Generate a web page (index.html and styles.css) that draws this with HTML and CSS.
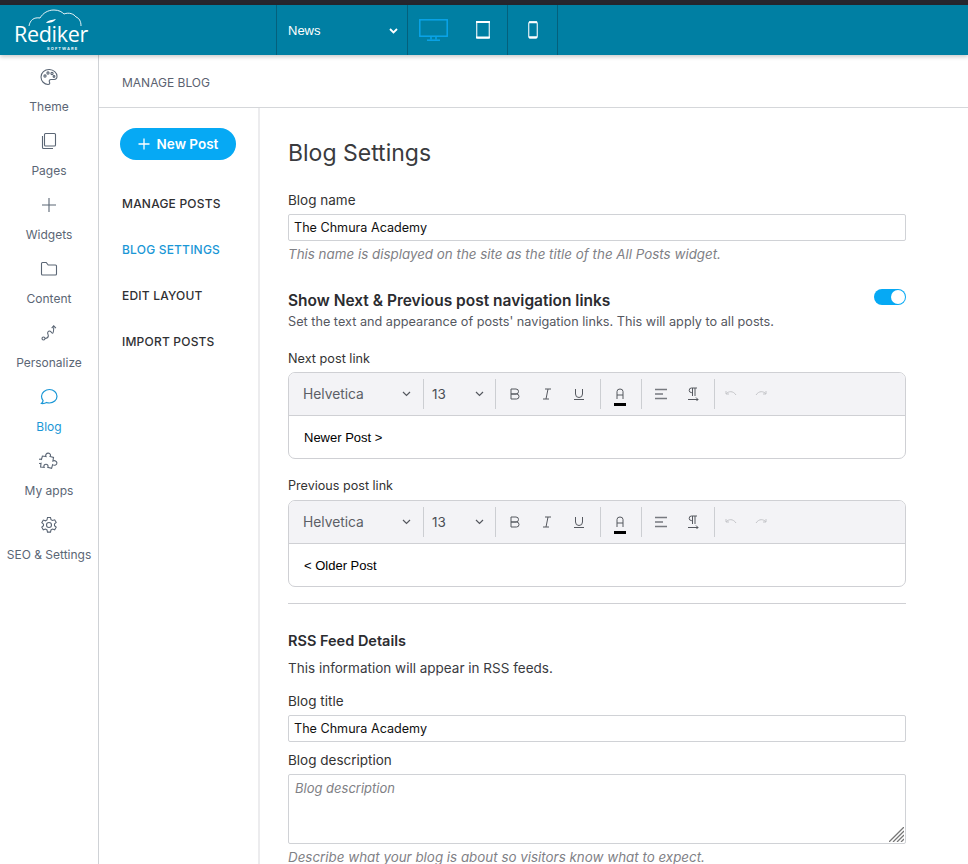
FILE: index.html
```html
<!DOCTYPE html>
<html lang="en">
<head>
<meta charset="utf-8">
<title>Blog Settings</title>
<link rel="stylesheet" href="styles.css">
</head>
<body>
<div class="app">
  <div class="strip"></div>
  <header class="topbar">
    <div class="brand">
      <svg class="cloud" width="54" height="18" viewBox="0 0 54 18" fill="none" stroke="#fff" stroke-width=".9">
        <path d="M1 17C2 11 6 8 12 9C15 4 20 1 26 1C31 1 34 3 36 5C41 3 46 5 48 8C51 9 53 12 53 17"/>
        <path d="M18 14C20 11 24 11 28 10C26 13 22 14 18 14Z" fill="#fff" stroke="none"/>
      </svg>
      <div class="brand-name">Rediker</div>
      <div class="brand-sub">SOFTWARE</div>
    </div>
    <div class="page-select"><span>News</span>
      <svg width="9" height="6" viewBox="0 0 9 6" fill="none" stroke="#fff" stroke-width="1.800"><path d="M1 1l3.500 3.500L8 1"/></svg>
    </div>
    <div class="device">
      <svg width="29" height="22" viewBox="0 0 29 22" fill="none" stroke="#0aa5ea" stroke-width="1.500"><rect x=".8" y=".8" width="27.400" height="16.400"/><path d="M12 18v2.500M17 18v2.500" stroke-width="1.500"/><path d="M8 21.200h13" stroke-width="1.500"/></svg>
    </div>
    <div class="device device-end">
      <svg width="14" height="18" viewBox="0 0 14 18" fill="none"><rect x=".7" y="1" width="12.600" height="16" rx="1" stroke="#cfe6ee" stroke-width="1.300"/><path d="M0 1h14M0 16.500h14" stroke="#fff" stroke-width="2"/></svg>
    </div>
    <div class="device device-end">
      <svg width="10" height="18" viewBox="0 0 10 18" fill="none"><rect x=".7" y="1" width="8.600" height="16" rx="1.500" stroke="#cfe6ee" stroke-width="1.300"/><path d="M1 1.200h8M1 16.300h8" stroke="#fff" stroke-width="2"/></svg>
    </div>
  </header>

  <div class="body">
    <nav class="rail">
      <a class="rail-item">
        <svg width="20" height="20" viewBox="0 0 20 20" fill="none" stroke="#5b6675" stroke-width="1.100"><path d="M10.500 2.500C5.500 2.300 2 5.800 2 10c0 4 3.300 7.500 7 7.500 1.800 0 2-1.300 1.500-2.300-.7-1.400 0-2.700 1.500-2.700h3c1.800 0 3-1.300 3-3.200 0-3.800-3.500-6.600-7.500-6.800z"/><circle cx="6" cy="9" r="1.100"/><circle cx="9" cy="6" r="1.100"/><circle cx="13" cy="6.500" r="1.100"/><circle cx="15" cy="9.500" r=".9"/></svg>
        <span>Theme</span>
      </a>
      <a class="rail-item">
        <svg width="20" height="20" viewBox="0 0 20 20" fill="none" stroke="#5b6675" stroke-width="1.100"><rect x="5.500" y="2.500" width="11" height="12.500" rx="1"/><path d="M3.500 5v11.500a1 1 0 0 0 1 1H14"/></svg>
        <span>Pages</span>
      </a>
      <a class="rail-item">
        <svg width="20" height="20" viewBox="0 0 20 20" fill="none" stroke="#5b6675" stroke-width="1.100"><path d="M10 3v14M3 10h14"/></svg>
        <span>Widgets</span>
      </a>
      <a class="rail-item">
        <svg width="20" height="20" viewBox="0 0 20 20" fill="none" stroke="#5b6675" stroke-width="1.100"><path d="M2.500 4.500a1 1 0 0 1 1-1h3.700l2 2.500h7.300a1 1 0 0 1 1 1V15a1 1 0 0 1-1 1h-13a1 1 0 0 1-1-1z"/></svg>
        <span>Content</span>
      </a>
      <a class="rail-item">
        <svg width="20" height="20" viewBox="0 0 20 20" fill="none" stroke="#5b6675" stroke-width="1.100"><circle cx="4.500" cy="15.500" r="1.500"/><path d="M6 15.500c2 0 3-.3 3.300-2.300.2-1.500-.9-2.200-.6-3.700.3-1.300 1.500-1.700 2.500-1.300 1.300.5 1 2 2.200 2 1.300 0 1.300-2.700 1.300-6"/><path d="M12.700 5.200l2-2.300 2.200 2.300"/></svg>
        <span>Personalize</span>
      </a>
      <a class="rail-item rail-active">
        <svg width="20" height="20" viewBox="0 0 20 20" fill="none" stroke="#1b97d6" stroke-width="1.200"><path d="M10.500 2.500c4 0 7.500 2.900 7.500 6.700 0 3.900-3.500 6.800-7.500 6.800-1 0-2-.1-2.900-.5-1.500.9-3.200 1.200-5.100 1 .9-.9 1.400-1.800 1.600-2.900C3 12.400 2.500 10.900 2.500 9.200c0-3.800 4-6.700 8-6.700z"/></svg>
        <span>Blog</span>
      </a>
      <a class="rail-item">
        <svg width="20" height="20" viewBox="0 0 20 20" fill="none" stroke="#5b6675" stroke-width="1.100"><path d="M7 5.500c-.9-1.900.6-3.500 2.300-3.400 1.700.1 2.900 1.800 1.700 3.400l3.500 1-.6 3.500c1.800-1 3.900.1 4 1.900.1 2-2.300 3.100-4.300 1.700l-1 3.700-3.800-1c.8-1.800-.4-3.100-1.800-3.100-1.500 0-2.700 1.500-1.800 3.200l-3.600-.3.400-3.800c-1.800.7-3.300-.6-3.200-2.100.1-1.700 2-2.700 3.700-1.700L3.400 5z"/></svg>
        <span>My apps</span>
      </a>
      <a class="rail-item">
        <svg width="20" height="20" viewBox="0 0 20 20" fill="none" stroke="#5b6675" stroke-width="1.100"><path d="M8.500 2.500h3l.5 2.200 1.500.8 2.200-.7 1.500 2.600-1.700 1.500v1.800l1.700 1.500-1.500 2.600-2.200-.7-1.500.8-.5 2.200h-3l-.5-2.200-1.500-.8-2.200.7-1.500-2.600 1.700-1.500V9.200L2.800 7.700l1.500-2.600 2.200.7 1.500-.8z"/><circle cx="10" cy="10" r="2.500"/></svg>
        <span>SEO &amp; Settings</span>
      </a>
    </nav>

    <main class="main">
      <div class="main-head">MANAGE BLOG</div>
      <div class="main-body">
        <aside class="subnav">
          <button class="new-post">
            <svg width="12" height="12" viewBox="0 0 12 12" stroke="#fff" stroke-width="1.300"><path d="M6 .5v11M.5 6h11"/></svg>
            New Post
          </button>
          <a class="sub-link">MANAGE POSTS</a>
          <a class="sub-link sub-active">BLOG SETTINGS</a>
          <a class="sub-link">EDIT LAYOUT</a>
          <a class="sub-link">IMPORT POSTS</a>
        </aside>

        <section class="form">
          <h1 class="title">Blog Settings</h1>

          <label class="label first">Blog name</label>
          <div class="input">The Chmura Academy</div>
          <p class="hint">This name is displayed on the site as the title of the All Posts widget.</p>

          <div class="heading-row">
            <h2 class="heading nav-heading">Show Next &amp; Previous post navigation links</h2>
            <div class="toggle"><div class="knob"></div></div>
          </div>
          <p class="sub">Set the text and appearance of posts' navigation links. This will apply to all posts.</p>

          <label class="label next">Next post link</label>
          <div class="editor">
            <div class="toolbar">
              <div class="tb-select tb-font">Helvetica
                <svg width="9" height="6" viewBox="0 0 9 6" fill="none" stroke="#55585f" stroke-width="1.200"><path d="M1 1l3.500 3.500L8 1"/></svg>
              </div>
              <div class="tb-select tb-size">13
                <svg width="9" height="6" viewBox="0 0 9 6" fill="none" stroke="#55585f" stroke-width="1.200"><path d="M1 1l3.500 3.500L8 1"/></svg>
              </div>
              <div class="tb-group tb-format">
                <svg class="ic" width="12" height="12" viewBox="0 0 12 12" fill="none" stroke="#55585f"><path d="M2 1h5a2.500 2.500 0 0 1 0 5H2zM2 6h5.500a2.500 2.500 0 0 1 0 5H2z"/></svg>
                <svg class="ic" width="12" height="12" viewBox="0 0 12 12" fill="none" stroke="#55585f"><path d="M4 1h6M2 11h6M7 1L5 11"/></svg>
                <svg class="ic" width="12" height="12" viewBox="0 0 12 12" fill="none" stroke="#55585f"><path d="M2.500 1v5a3.500 3.500 0 0 0 7 0V1M1 11.500h10"/></svg>
              </div>
              <div class="tb-group tb-color">
                <svg width="12" height="18" viewBox="0 0 12 18" fill="none"><path d="M3 11V3.500a3 2.500 0 0 1 6 0V11M3 7h6" stroke="#55585f"/><rect y="15" width="12" height="3" fill="#000"/></svg>
              </div>
              <div class="tb-group tb-para">
                <svg class="ic" width="12" height="12" viewBox="0 0 12 12" fill="none" stroke="#777a80" stroke-width="1.300"><path d="M0 1.500h12M0 6h8M0 10.500h12"/></svg>
                <svg class="ic" width="12" height="14" viewBox="0 0 12 14" fill="none" stroke="#55585f"><path d="M5.500 1v8M8 1v8M10 1H4.500a2.300 2.300 0 0 0 0 4.600h1M1 12.500h10M9 10.500l2 2-2 2"/></svg>
              </div>
              <div class="tb-group tb-last">
                <svg class="ic" width="12" height="8" viewBox="0 0 12 8" fill="none" stroke="#c4c5c9"><path d="M1 1v3h3M1 4c2.500-3 7-3.500 10 1"/></svg>
                <svg class="ic" width="12" height="8" viewBox="0 0 12 8" fill="none" stroke="#c4c5c9"><path d="M11 1v3H8M11 4C8.500 1 4 .5 1 5"/></svg>
              </div>
            </div>
            <div class="editor-text">Newer Post &gt;</div>
          </div>

          <label class="label prev">Previous post link</label>
          <div class="editor">
            <div class="toolbar">
              <div class="tb-select tb-font">Helvetica
                <svg width="9" height="6" viewBox="0 0 9 6" fill="none" stroke="#55585f" stroke-width="1.200"><path d="M1 1l3.500 3.500L8 1"/></svg>
              </div>
              <div class="tb-select tb-size">13
                <svg width="9" height="6" viewBox="0 0 9 6" fill="none" stroke="#55585f" stroke-width="1.200"><path d="M1 1l3.500 3.500L8 1"/></svg>
              </div>
              <div class="tb-group tb-format">
                <svg class="ic" width="12" height="12" viewBox="0 0 12 12" fill="none" stroke="#55585f"><path d="M2 1h5a2.500 2.500 0 0 1 0 5H2zM2 6h5.500a2.500 2.500 0 0 1 0 5H2z"/></svg>
                <svg class="ic" width="12" height="12" viewBox="0 0 12 12" fill="none" stroke="#55585f"><path d="M4 1h6M2 11h6M7 1L5 11"/></svg>
                <svg class="ic" width="12" height="12" viewBox="0 0 12 12" fill="none" stroke="#55585f"><path d="M2.500 1v5a3.500 3.500 0 0 0 7 0V1M1 11.500h10"/></svg>
              </div>
              <div class="tb-group tb-color">
                <svg width="12" height="18" viewBox="0 0 12 18" fill="none"><path d="M3 11V3.500a3 2.500 0 0 1 6 0V11M3 7h6" stroke="#55585f"/><rect y="15" width="12" height="3" fill="#000"/></svg>
              </div>
              <div class="tb-group tb-para">
                <svg class="ic" width="12" height="12" viewBox="0 0 12 12" fill="none" stroke="#777a80" stroke-width="1.300"><path d="M0 1.500h12M0 6h8M0 10.500h12"/></svg>
                <svg class="ic" width="12" height="14" viewBox="0 0 12 14" fill="none" stroke="#55585f"><path d="M5.500 1v8M8 1v8M10 1H4.500a2.300 2.300 0 0 0 0 4.600h1M1 12.500h10M9 10.500l2 2-2 2"/></svg>
              </div>
              <div class="tb-group tb-last">
                <svg class="ic" width="12" height="8" viewBox="0 0 12 8" fill="none" stroke="#c4c5c9"><path d="M1 1v3h3M1 4c2.500-3 7-3.500 10 1"/></svg>
                <svg class="ic" width="12" height="8" viewBox="0 0 12 8" fill="none" stroke="#c4c5c9"><path d="M11 1v3H8M11 4C8.500 1 4 .5 1 5"/></svg>
              </div>
            </div>
            <div class="editor-text">&lt; Older Post</div>
          </div>

          <hr class="rule">

          <h2 class="heading rss">RSS Feed Details</h2>
          <p class="rss-note">This information will appear in RSS feeds.</p>

          <label class="label rss-label">Blog title</label>
          <div class="input">The Chmura Academy</div>
          <label class="label desc-label">Blog description</label>
          <div class="textarea">Blog description
            <svg class="grip" width="15" height="15" viewBox="0 0 15 15" stroke="#777" stroke-width="1.300"><path d="M0 15L15 0M4 15L15 4M8 15l7-7M12 15l3-3"/></svg>
          </div>
          <p class="hint tail">Describe what your blog is about so visitors know what to expect.</p>
        </section>
      </div>
    </main>
  </div>
</div>
</body>
</html>
```
FILE: styles.css
```css
* { box-sizing: border-box; }
html, body { margin: 0; height: 100%; overflow: hidden; background: #fff; }
body { font-family: Inter, "Noto Sans", sans-serif; color: #2f3033; font-size: 13px; }
.app { height: 864px; display: flex; flex-direction: column; overflow: hidden; }
.strip { height: 5px; background: #26262e; flex: none; }

.topbar { height: 50px; flex: none; background: #007fa3; display: flex; color: #fff; box-shadow: 0 2px 4px rgba(0,0,0,.2); position: relative; z-index: 2; }
.brand { width: 277px; position: relative; border-right: 1px solid #04607c; padding: 20px 0 0 14px; flex: none; }
.cloud { position: absolute; left: 28px; top: 4px; }
.brand-name { font-family: "Open Sans", sans-serif; font-size: 21.500px; line-height: 18px; letter-spacing: -.3px; }
.brand-sub { font-size: 4px; letter-spacing: 1.100px; line-height: 5px; margin: 3px 0 0 33px; font-weight: 600; }
.page-select { width: 131px; flex: none; border-right: 1px solid #04607c; display: flex; align-items: center; justify-content: space-between; padding: 1px 9px 0 11px; font-size: 13px; font-family: "Liberation Sans", sans-serif; }
.device { width: 50px; flex: none; display: flex; align-items: center; justify-content: center; }
.device-end { border-right: 1px solid #04607c; }

.body { flex: 1; display: flex; min-height: 0; }
.rail { width: 99px; flex: none; border-right: 1px solid #cfd2d6; padding-top: 5px; }
.rail-item { height: 64px; display: flex; flex-direction: column; align-items: center; gap: 12px; padding-top: 7px; color: #5b6675; font-size: 12px; line-height: 16px; white-space: nowrap; }
.rail-item svg { flex: none; }
.rail-active { color: #1b97d6; }

.main { flex: 1; min-width: 0; display: flex; flex-direction: column; }
.main-head { height: 53px; flex: none; border-bottom: 1px solid #d5d7da; padding: 2px 0 0 23px; display: flex; align-items: center; font-size: 12px; color: #5b6270; }
.main-body { flex: 1; display: flex; min-height: 0; }
.subnav { width: 161px; flex: none; border-right: 2px solid #ececee; padding: 20px 0 0 21px; }
.new-post { width: 116px; height: 32px; border: 0; border-radius: 16px; background: #06a9f4; color: #fff; font: 600 13.500px Inter, sans-serif; display: flex; align-items: center; justify-content: center; gap: 7px; padding: 0; margin-bottom: 25px; }
.sub-link { display: block; height: 46px; line-height: 38px; padding-left: 2px; font-size: 12px; font-weight: 500; color: #2f3033; letter-spacing: .2px; }
.sub-active { color: #1b97d6; }

.form { width: 647px; flex: none; padding: 29px 0 0 28px; }
.title { margin: 0; font-size: 23px; line-height: 32px; font-weight: 400; color: #3a3b3e; }
.label { display: block; line-height: 20px; font-size: 13.500px; color: #333; margin: 8px 0 4px; }
.first { margin-top: 21px; }
.next { margin: 18px 0 3px; font-size: 12.700px; }
.prev { margin: 17px 0 4px; font-size: 12.600px; }
.rss-label { margin-top: 13px; }
.input { height: 27px; border: 1px solid #d0d2d6; border-radius: 2px; line-height: 25px; padding-left: 5px; color: #111; font-size: 12.600px; background: #fff; width: 618px; }
.hint { margin: 3px 0 0; line-height: 20px; font-size: 13.380px; font-style: italic; color: #7f8186; }
.tail { margin-top: 3px; }
.heading-row { display: flex; justify-content: space-between; margin-top: 27px; width: 618px; }
.heading { margin: 0; font-size: 15px; line-height: 20px; font-weight: 600; color: #2b2c30; }
.nav-heading { font-size: 15.500px; }
.toggle { width: 32px; height: 16px; border-radius: 8px; background: #06a9f4; margin-top: -2px; padding: 1px; display: flex; justify-content: flex-end; }
.knob { width: 14px; height: 14px; border-radius: 50%; background: #fff; }
.sub { margin: 2px 0 0; line-height: 18px; font-size: 12.700px; color: #55585f; }
.editor { width: 618px; height: 87px; border: 1px solid #cfd0d4; border-radius: 7px; overflow: hidden; background: #fff; }
.toolbar { height: 43px; background: #f3f3f6; border-bottom: 1px solid #cfd0d4; display: flex; align-items: center; }
.tb-select { height: 30px; display: flex; align-items: center; justify-content: space-between; border-right: 1px solid #ccced2; color: #5c5f66; font-size: 13.800px; flex: none; }
.tb-font { width: 135px; padding: 0 12px 0 14px; }
.tb-size { width: 72px; padding: 0 11px 0 8px; color: #4b4e55; font-size: 13.500px; }
.tb-group { height: 30px; display: flex; align-items: center; gap: 20px; padding: 0 10px; border-right: 1px solid #ccced2; flex: none; }
.tb-format { width: 105px; padding: 0 13px; }
.tb-color { padding: 6px 15px 0 13px; width: 41px; }
.tb-para { width: 73px; padding: 0 13px; }
.tb-last { border-right: 0; padding: 0 10px; gap: 18px; }
.editor-text { padding: 14px 0 0 15px; font: 13px/16px "Liberation Sans", sans-serif; color: #000; }
.rule { margin: 16px 0 0; border: 0; border-top: 1px solid #cfd0d4; width: 618px; }
.rss { margin-top: 27px; font-size: 14.500px; }
.rss-note { margin: 7px 0 0; line-height: 20px; font-size: 13.500px; color: #3a3b3f; }
.textarea { position: relative; width: 618px; height: 70px; border: 1px solid #d0d2d6; border-radius: 2px; padding: 5px 6px; line-height: 16px; font-size: 13px; font-style: italic; color: #7f8186; }
.grip { position: absolute; right: 1px; bottom: 1px; }
```
